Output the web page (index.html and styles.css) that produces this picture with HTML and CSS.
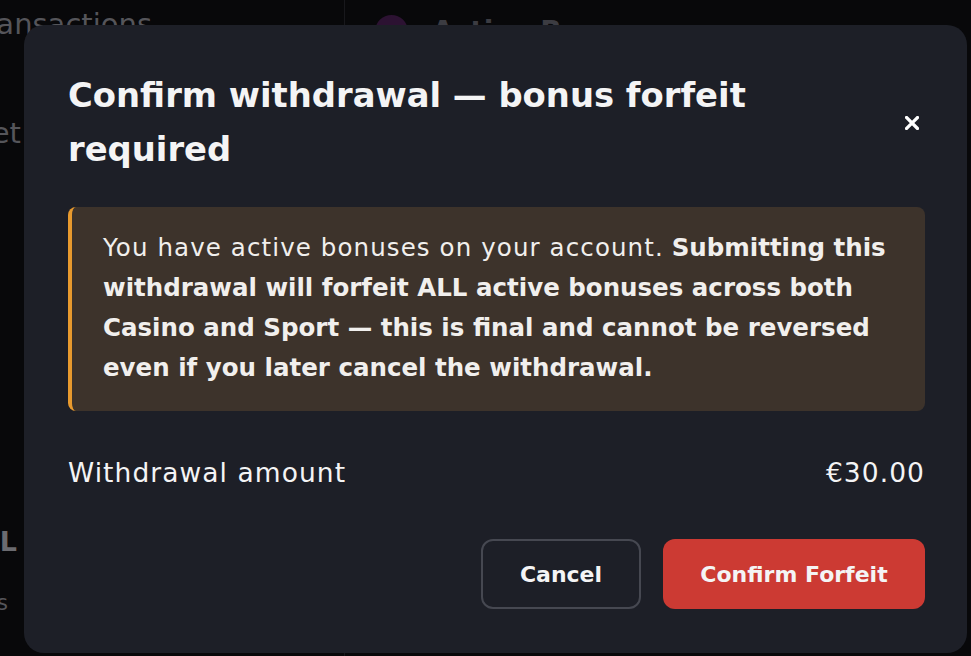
FILE: index.html
```html
<!DOCTYPE html>
<html lang="en">
<head>
<meta charset="utf-8">
<title>Confirm withdrawal</title>
<link rel="stylesheet" href="styles.css">
</head>
<body>
<div class="page">
  <aside class="sidebar">
    <div class="side-row row-1"><span>Transactions</span></div>
    <div class="side-row row-2"><span>Wallet</span></div>
    <div class="side-row row-3"><span class="side-bold">TOTAL</span></div>
    <div class="side-row row-4"><span class="side-small">Details</span></div>
  </aside>
  <main class="content">
    <div class="content-head">
      <span class="avatar"></span>
      <span class="content-title">Active Bonuses</span>
    </div>
  </main>
</div>

<div class="overlay">
  <div class="modal" role="dialog" aria-labelledby="modal-title">
    <div class="modal-head">
      <h2 class="modal-title" id="modal-title">Confirm withdrawal — bonus forfeit required</h2>
      <button class="close" aria-label="Close">
        <svg viewBox="0 0 14 14" width="14" height="14"><path d="M1.5 1.5 L12.5 12.5 M12.5 1.5 L1.5 12.5" stroke="#ffffff" stroke-width="3.2" stroke-linecap="square"/></svg>
      </button>
    </div>
    <div class="notice">
      <span class="notice-reg">You have active bonuses on your account.</span> <strong>Submitting this withdrawal will forfeit ALL active bonuses across both Casino and Sport — this is final and cannot be reversed even if you later cancel the withdrawal.</strong>
    </div>
    <div class="amount-row">
      <span>Withdrawal amount</span>
      <span>€30.00</span>
    </div>
    <div class="actions">
      <button class="btn btn-cancel">Cancel</button>
      <button class="btn btn-confirm">Confirm Forfeit</button>
    </div>
  </div>
</div>
</body>
</html>
```
FILE: styles.css
```css
* { box-sizing: border-box; }
html, body { margin: 0; height: 100%; }
body {
  background: #08080a;
  font-family: "DejaVu Sans", Inter, sans-serif;
  color: #f4f4f5;
  overflow: hidden;
}
.page {
  display: flex;
  height: 100%;
}
.sidebar {
  width: 345px;
  flex: none;
  display: flex;
  flex-direction: column;
  color: #55555a;
  font-size: 29px;
  border-right: 1px solid #18181c;
}
.side-row {
  display: flex;
  justify-content: flex-end;
  white-space: nowrap;
  line-height: 34px;
}
.side-row > span { flex: none; }
.row-1 { width: 152px; margin-top: 7px; }
.row-2 { width: 21px; margin-top: 75px; }
.row-3 { width: 17px; margin-top: 375px; }
.row-4 { width: 8px; margin-top: 27px; }
.side-bold { font-weight: 700; font-size: 27px; color: #6b6b70; }
.side-small { font-size: 21px; }
.content { flex: 1; padding: 15px 0 0 30px; }
.content-head { display: flex; align-items: center; gap: 24px; }
.avatar { width: 33px; height: 33px; border-radius: 50%; background: #2c1232; }
.content-title { font-size: 28px; color: #3c3c42; font-weight: 700; }

.overlay {
  position: fixed;
  inset: 0;
  padding: 25px 4px 3px 24px;
  display: flex;
}
.modal {
  flex: 1;
  background: #1d1f27;
  border-radius: 20px;
  padding: 44px 42px 44px 44px;
  display: flex;
  flex-direction: column;
}
.modal-head {
  display: flex;
  align-items: center;
  justify-content: space-between;
}
.modal-title {
  margin: 0;
  max-width: 780px;
  font-size: 33.8px;
  line-height: 54px;
  font-weight: 700;
  color: #f4f4f5;
}
.close {
  width: 28px;
  height: 28px;
  padding: 0;
  border: 0;
  background: transparent;
  display: flex;
  align-items: center;
  justify-content: center;
  margin-right: -1px;
}
.notice {
  margin-top: 30px;
  background: #3d332b;
  border-left: 4px solid #e89a2e;
  border-radius: 8px;
  padding: 21px 28px 23px 31px;
  font-size: 24.5px;
  line-height: 40px;
  color: #f1efed;
}
.notice-reg { letter-spacing: 0.045em; }
.notice strong { font-weight: 700; }
.amount-row {
  margin-top: 45px;
  display: flex;
  justify-content: space-between;
  font-size: 26.5px;
  line-height: 34px;
  letter-spacing: 0.04em;
}
.actions {
  margin-top: 49px;
  display: flex;
  justify-content: flex-end;
  gap: 22px;
}
.btn {
  height: 70px;
  border-radius: 12px;
  font-family: inherit;
  font-size: 22px;
  font-weight: 700;
  color: #f4f4f5;
  cursor: pointer;
}
.btn-cancel {
  width: 160px;
  background: transparent;
  border: 2px solid #464851;
}
.btn-confirm {
  width: 262px;
  background: #cc3a33;
  border: 0;
}
```
